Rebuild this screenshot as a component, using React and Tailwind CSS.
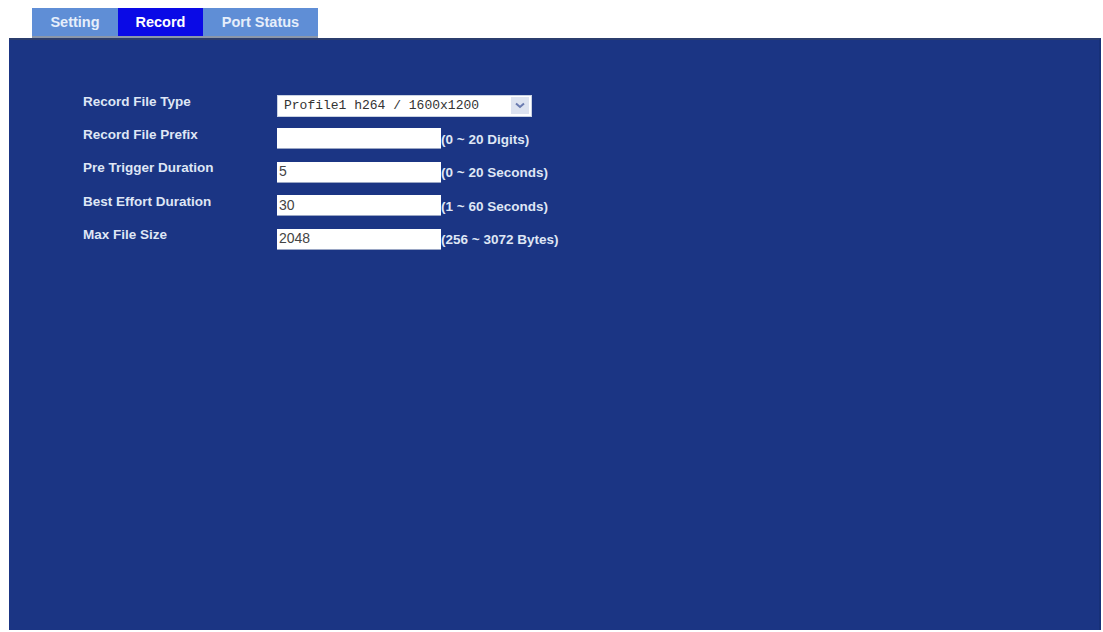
import React from 'react';

const rows = [
  { label: 'Record File Prefix', value: '', hint: '(0 ~ 20 Digits)' },
  { label: 'Pre Trigger Duration', value: '5', hint: '(0 ~ 20 Seconds)' },
  { label: 'Best Effort Duration', value: '30', hint: '(1 ~ 60 Seconds)' },
  { label: 'Max File Size', value: '2048', hint: '(256 ~ 3072 Bytes)' },
];

const Tab = ({ children, active, width }) => (
  <div
    className={`flex items-center justify-center h-[28px] pt-[1px] text-[14.5px] font-bold ${width} ${
      active ? 'bg-[#0a0ae6] text-white' : 'bg-[#5f8ed6] text-[#e6eefb]'
    }`}
  >
    {children}
  </div>
);

export default function App() {
  return (
    <div className="w-[1103px] h-[632px] bg-white pt-[8px] pl-[9px] pr-[2px] pb-[2px] flex flex-col font-['Liberation_Sans',Arial,sans-serif]">
      {/* Tabs */}
      <div className="flex pl-[23px] h-[30px] items-start">
        <div className="flex border-b-2 border-[#8a97ab]">
          <Tab width="w-[86px]">Setting</Tab>
          <Tab width="w-[85px]" active>Record</Tab>
          <Tab width="w-[115px]">Port Status</Tab>
        </div>
      </div>

      {/* Panel */}
      <div className="flex-1 bg-[#1b3584] border-t-2 border-[#2b3d6e] border-r-2 border-r-[#173078] pt-[49px] pl-[74px]">
        <div className="flex items-center h-[33px]">
          <div className="w-[194px] text-[13.5px] font-bold text-[#dfe6f5] -mt-[6px]">Record File Type</div>
          <div className="w-[255px] h-[22px] bg-white border border-[#c9d2e3] flex items-center justify-between pl-[6px] pr-[2px]">
            <span className="text-[13px] font-['Liberation_Mono','Courier_New',monospace] text-[#333] whitespace-pre">Profile1 h264 / 1600x1200</span>
            <span className="w-[18px] h-[17px] bg-[#dde3f0] flex items-center justify-center">
              <svg width="10" height="7" viewBox="0 0 10 7">
                <path d="M1 1.5 L5 5 L9 1.5" fill="none" stroke="#6a7bb0" strokeWidth="2" />
              </svg>
            </span>
          </div>
        </div>
        {rows.map((r) => (
          <div key={r.label} className="flex items-center h-[33.5px]">
            <div className="w-[194px] text-[13.5px] font-bold text-[#dfe6f5] -mt-[8px]">{r.label}</div>
            <div className="w-[164px] h-[21px] bg-white border-b border-[#9aa6c4] flex items-center pl-[2px] text-[14px] text-[#444]">
              {r.value}
            </div>
            <div className="text-[13.5px] font-bold text-[#dfe6f5] pt-[2px]">{r.hint}</div>
          </div>
        ))}
      </div>
    </div>
  );
}
